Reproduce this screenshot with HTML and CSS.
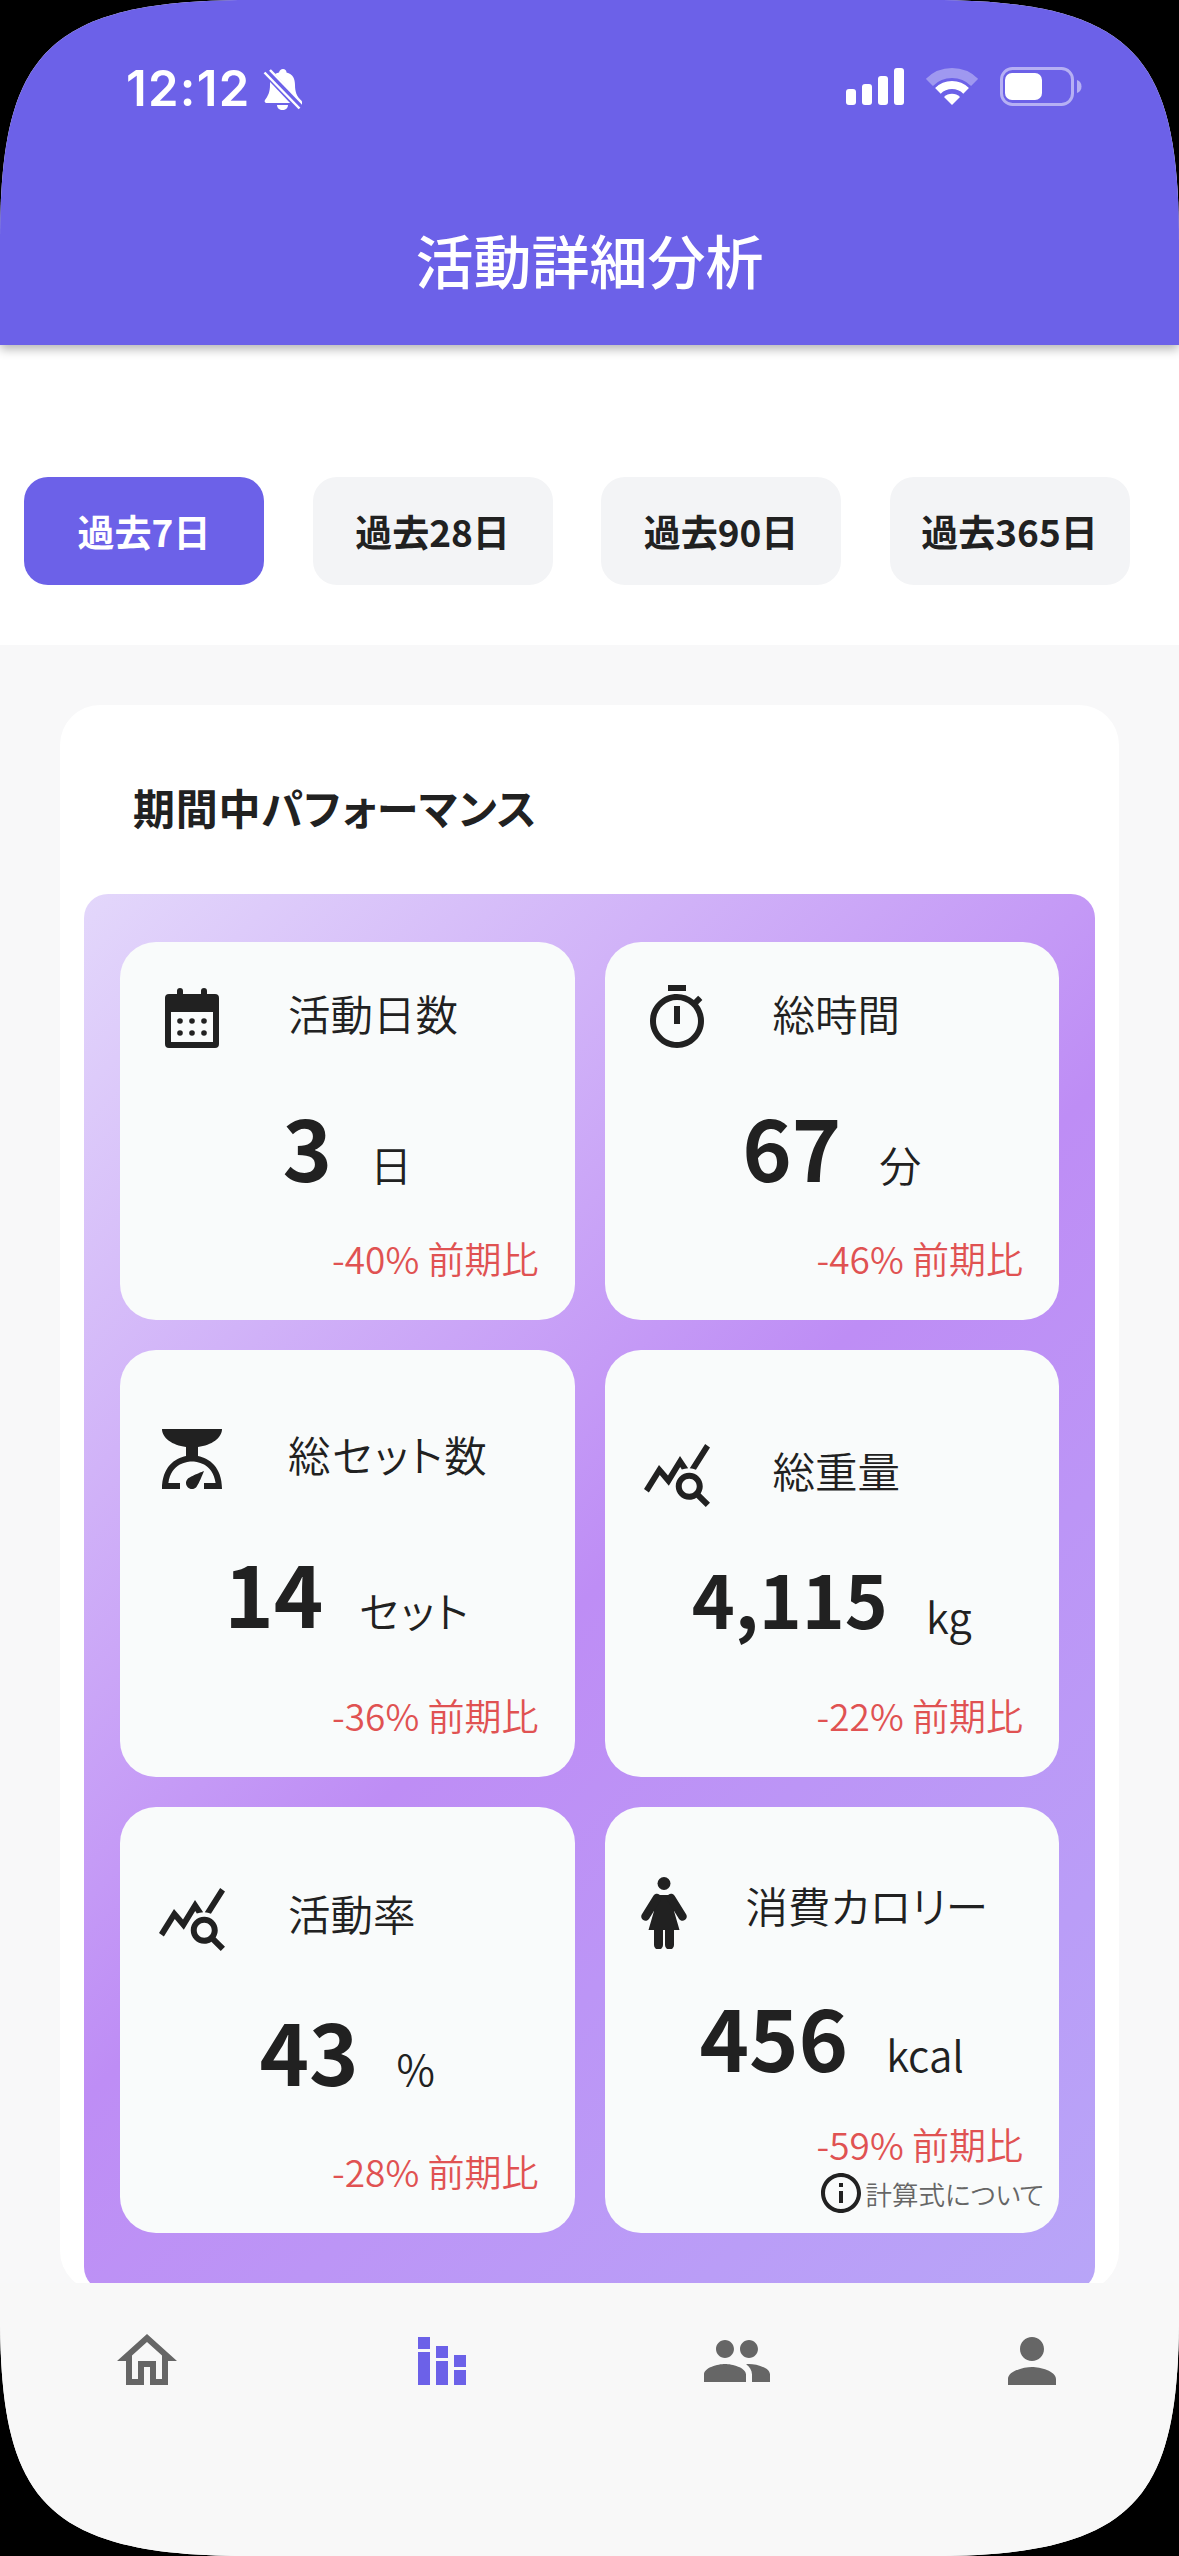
FILE: index.html
```html
<!DOCTYPE html>
<html lang="ja">
<head>
  <meta charset="UTF-8">
  <meta name="viewport" content="width=device-width, initial-scale=1.0">
  <title>活動詳細分析</title>
  <link rel="stylesheet" href="styles.css">
</head>
<body>
  <div class="screen">
    <header class="app-header">
      <div class="status-bar">
        <div class="status-left">
          <span class="clock">12:12</span>
          <svg class="bell" viewBox="0 0 39 41">
            <path d="M20 0c2 0 3.500 1.500 3.500 3.500C30 5 32 10 32 16c0 7 2 11 5 15 1 1.500 0 3-1.500 3h-32C2 34 1 32.500 2 31c3-4 5-8 5-15 0-6 2-11 9-12.500C16.500 1.500 18 0 20 0z" fill="#fff"/>
            <path d="M14 36h11c0 3-2.500 5-5.500 5S14 39 14 36z" fill="#fff"/>
            <path d="M3 2l35 37" stroke="#6c61e8" stroke-width="9"/>
            <path d="M1.500 3.500l35 36" stroke="#fff" stroke-width="2.500"/>
            <path d="M7 1l33 34" stroke="#fff" stroke-width="2.500"/>
          </svg>
        </div>
        <div class="status-right">
          <svg class="signal" viewBox="0 0 58 37" fill="#fff">
            <rect x="0" y="21" width="10" height="16" rx="3"/>
            <rect x="16" y="16" width="10" height="21" rx="3"/>
            <rect x="32" y="8" width="10" height="29" rx="3"/>
            <rect x="48" y="0" width="10" height="37" rx="3"/>
          </svg>
          <svg class="wifi" viewBox="0 0 52 37" fill="none">
            <path d="M3.400 14.400a32 32 0 0 1 45.200 0" stroke="#fff" stroke-opacity=".35" stroke-width="10"/>
            <path d="M11.900 22.900a20 20 0 0 1 28.200 0" stroke="#fff" stroke-width="8"/>
            <path d="M26 37l-8-8a11.300 11.300 0 0 1 16 0z" fill="#fff"/>
          </svg>
          <svg class="battery" viewBox="0 0 82 39">
            <rect x="1.500" y="1.500" width="71" height="36" rx="11" fill="none" stroke="#fff" stroke-opacity=".5" stroke-width="3"/>
            <rect x="5" y="6" width="37" height="27" rx="7" fill="#fff"/>
            <path d="M77 13c3 1 4.500 3.500 4.500 6.500S80 25 77 26z" fill="#fff" fill-opacity=".5"/>
          </svg>
        </div>
      </div>
      <h1 class="app-title">活動詳細分析</h1>
    </header>

    <nav class="period-tabs">
      <button class="period-tab active">過去7日</button>
      <button class="period-tab">過去28日</button>
      <button class="period-tab">過去90日</button>
      <button class="period-tab">過去365日</button>
    </nav>

    <main class="content">
      <section class="perf-card">
        <h2 class="perf-title">期間中パフォーマンス</h2>
        <div class="stat-grid">

          <div class="stat stat-days">
            <div class="stat-head">
              <svg class="icon" viewBox="0 0 72 72">
                <path fill-rule="evenodd" d="M13 12h8V9a3 3 0 0 1 6 0v3h18V9a3 3 0 0 1 6 0v3h8a4 4 0 0 1 4 4v46a4 4 0 0 1-4 4H13a4 4 0 0 1-4-4V16a4 4 0 0 1 4-4zm2 18v30h42V30z" fill="#212121"/>
                <g fill="#212121">
                  <circle cx="24" cy="39" r="2.800"/><circle cx="36" cy="39" r="2.800"/><circle cx="48" cy="39" r="2.800"/>
                  <circle cx="24" cy="51" r="2.800"/><circle cx="36" cy="51" r="2.800"/><circle cx="48" cy="51" r="2.800"/>
                </g>
              </svg>
              <span class="stat-label">活動日数</span>
            </div>
            <div class="stat-value"><b>3</b><span>日</span></div>
            <div class="stat-trend">-40% 前期比</div>
          </div>

          <div class="stat stat-days">
            <div class="stat-head">
              <svg class="icon" viewBox="0 0 24 24"><path d="M15 1H9v2h6V1zm-4 13h2V8h-2v6zm8.030-6.610l1.420-1.420c-.43-.51-.9-.99-1.410-1.410l-1.420 1.420C16.070 4.740 14.120 4 12 4c-4.970 0-9 4.030-9 9s4.020 9 9 9 9-4.030 9-9c0-2.120-.74-4.070-1.970-5.610zM12 20c-3.870 0-7-3.130-7-7s3.130-7 7-7 7 3.130 7 7-3.130 7-7 7z" fill="#212121"/></svg>
              <span class="stat-label">総時間</span>
            </div>
            <div class="stat-value"><b>67</b><span>分</span></div>
            <div class="stat-trend">-46% 前期比</div>
          </div>

          <div class="stat stat-sets">
            <div class="stat-head">
              <svg class="icon" viewBox="0 0 24 24"><path d="M14 11V8c4.560-.58 8-3.020 8-6H2c0 2.980 3.440 5.420 8 6v3c-3.680.73-8 3.610-8 11h6v-2H4.130c.93-6.830 6.650-7.200 7.870-7.200s6.940.37 7.870 7.200H16v2h6c0-7.390-4.320-10.270-8-11zm-2 11c-1.100 0-2-.9-2-2 0-.55.22-1.050.59-1.410C11.390 17.790 16 16 16 16s-1.790 4.610-2.590 5.410c-.36.37-.86.59-1.410.59z" fill="#212121"/></svg>
              <span class="stat-label">総セット数</span>
            </div>
            <div class="stat-value"><b>14</b><span>セット</span></div>
            <div class="stat-trend">-36% 前期比</div>
          </div>

          <div class="stat stat-weight">
            <div class="stat-head">
              <svg class="icon" viewBox="0 0 24 24"><path d="M19.880 18.470c.44-.7.7-1.510.7-2.390 0-2.490-2.010-4.500-4.500-4.500s-4.500 2.010-4.500 4.500 2.010 4.500 4.490 4.500c.88 0 1.700-.26 2.390-.7L21.580 23 23 21.580l-3.120-3.110zm-3.800.11c-1.380 0-2.500-1.120-2.500-2.500s1.120-2.500 2.500-2.500 2.500 1.120 2.500 2.500-1.120 2.500-2.500 2.500zm-.36-8.500c-.74.02-1.450.18-2.100.45l-.55-.83-3.800 6.180-3.010-3.520-3.630 5.810L1 17l5-8 3 3.500L13 6l2.720 4.080zm2.590.5c-.64-.28-1.330-.45-2.050-.49L21.380 2 23 3.180l-4.690 7.400z" fill="#212121"/></svg>
              <span class="stat-label">総重量</span>
            </div>
            <div class="stat-value"><b>4,115</b><span>kg</span></div>
            <div class="stat-trend">-22% 前期比</div>
          </div>

          <div class="stat stat-rate">
            <div class="stat-head">
              <svg class="icon" viewBox="0 0 24 24"><path d="M19.880 18.470c.44-.7.7-1.510.7-2.390 0-2.490-2.010-4.500-4.500-4.500s-4.500 2.010-4.500 4.500 2.010 4.500 4.490 4.500c.88 0 1.700-.26 2.390-.7L21.580 23 23 21.580l-3.120-3.110zm-3.800.11c-1.380 0-2.500-1.120-2.500-2.500s1.120-2.500 2.500-2.500 2.500 1.120 2.500 2.500-1.120 2.500-2.500 2.500zm-.36-8.500c-.74.02-1.450.18-2.100.45l-.55-.83-3.800 6.180-3.010-3.520-3.630 5.810L1 17l5-8 3 3.500L13 6l2.720 4.080zm2.590.5c-.64-.28-1.330-.45-2.050-.49L21.380 2 23 3.180l-4.690 7.400z" fill="#212121"/></svg>
              <span class="stat-label">活動率</span>
            </div>
            <div class="stat-value"><b>43</b><span>%</span></div>
            <div class="stat-trend">-28% 前期比</div>
          </div>

          <div class="stat stat-kcal">
            <div class="stat-head">
              <svg class="icon icon-narrow" viewBox="0 0 46 72" fill="#212121">
                <circle cx="23" cy="6.500" r="6.500"/>
                <path d="M17 18h12c2 0 3 1 4 3v13l5.500 19h-31L13 34V21c1-2 2-3 4-3z"/>
                <path d="M16 21L4.500 39.500M30 21l11.500 18.500" stroke="#212121" stroke-width="8.500" stroke-linecap="round"/>
                <path d="M13 52h9v16a4.500 4.500 0 0 1-9 0zM24 52h9v16a4.500 4.500 0 0 1-9 0z"/>
              </svg>
              <span class="stat-label">消費カロリー</span>
            </div>
            <div class="stat-value"><b>456</b><span>kcal</span></div>
            <div class="stat-trend">-59% 前期比</div>
            <div class="stat-note">
              <svg viewBox="0 0 24 24"><path d="M11 7h2v2h-2zm0 4h2v6h-2zm1-9C6.480 2 2 6.480 2 12s4.480 10 10 10 10-4.480 10-10S17.520 2 12 2zm0 18c-4.410 0-8-3.590-8-8s3.590-8 8-8 8 3.590 8 8-3.590 8-8 8z" fill="#212121"/></svg>
              <span>計算式について</span>
            </div>
          </div>

        </div>
      </section>
    </main>

    <footer class="bottom-nav">
      <svg class="nav-icon" viewBox="0 0 24 24"><path d="M12 5.690l5 4.500V18h-2v-6H9v6H7v-7.810l5-4.500M12 3L2 12h3v8h6v-6h2v6h6v-8h3L12 3z"/></svg>
      <svg class="nav-icon active" viewBox="0 0 72 72">
        <rect x="12" y="12" width="12" height="12"/><rect x="12" y="27" width="12" height="33"/>
        <rect x="30" y="21" width="12" height="12"/><rect x="30" y="36" width="12" height="24"/>
        <rect x="48" y="30" width="12" height="12"/><rect x="48" y="45" width="12" height="15"/>
      </svg>
      <svg class="nav-icon" viewBox="0 0 24 24"><path d="M16 11c1.660 0 2.990-1.340 2.990-3S17.660 5 16 5c-1.660 0-3 1.340-3 3s1.340 3 3 3zm-8 0c1.660 0 2.990-1.340 2.990-3S9.660 5 8 5C6.340 5 5 6.340 5 8s1.340 3 3 3zm0 2c-2.330 0-7 1.170-7 3.500V19h14v-2.500c0-2.330-4.670-3.500-7-3.500zm8 0c-.29 0-.62.02-.97.05 1.160.84 1.970 1.970 1.970 3.450V19h6v-2.500c0-2.330-4.670-3.500-7-3.500z"/></svg>
      <svg class="nav-icon" viewBox="0 0 24 24"><path d="M12 12c2.210 0 4-1.790 4-4s-1.790-4-4-4-4 1.790-4 4 1.790 4 4 4zm0 2c-2.670 0-8 1.340-8 4v2h16v-2c0-2.660-5.330-4-8-4z"/></svg>
    </footer>
  </div>
</body>
</html>
```

FILE: styles.css
```css
html, body {
  margin: 0;
  padding: 0;
  background-color: #000;
}

body {
  font-family: "Noto Sans CJK JP", "Noto Sans", sans-serif;
  font-feature-settings: "palt";
  color: #212121;
}

.screen {
  width: 1179px;
  height: 2556px;
  display: flex;
  flex-direction: column;
  overflow: hidden;
  background-color: #fff;
  clip-path: path("M248 0 H931 C1139 0 1179 60 1179 243 V2313 C1179 2496 1139 2556 931 2556 H248 C40 2556 0 2496 0 2313 V243 C0 60 40 0 248 0 Z");
}

/* header */
.app-header {
  position: relative;
  z-index: 2;
  height: 345px;
  flex-shrink: 0;
  background-color: #6c61e8;
  box-shadow: 0 4px 10px rgba(0, 0, 0, 0.3);
  color: #fff;
}

.status-bar {
  display: flex;
  justify-content: space-between;
  align-items: flex-start;
  padding: 60px 97px 0 126px;
  height: 50px;
}

.status-left {
  display: flex;
  align-items: center;
  gap: 12px;
}

.clock {
  font-family: Inter, "Liberation Sans", sans-serif;
  font-weight: 600;
  font-size: 49px;
  letter-spacing: 1.300px;
  line-height: 58px;
}

.bell {
  width: 39px;
  height: 41px;
}

.status-right {
  display: flex;
  align-items: flex-start;
  gap: 22px;
  padding-top: 8px;
}

.signal {
  width: 58px;
  height: 37px;
}

.wifi {
  width: 52px;
  height: 37px;
}

.battery {
  width: 82px;
  height: 39px;
  margin-top: -1px;
}

.app-title {
  margin: 113px 0 0;
  text-align: center;
  font-size: 58px;
  line-height: 72px;
  font-weight: 500;
}

/* period tabs */
.period-tabs {
  flex-shrink: 0;
  display: flex;
  gap: 48.500px;
  padding: 132px 0 60px 24px;
  background-color: #fff;
}

.period-tab {
  width: 240px;
  height: 108px;
  padding: 0;
  border: none;
  border-radius: 24px;
  background-color: #f3f4f6;
  color: #212121;
  font-family: inherit;
  font-feature-settings: inherit;
  font-size: 37px;
  font-weight: 700;
}

.period-tab.active {
  background-color: #6c61e8;
  color: #fff;
}

/* main content */
.content {
  flex: 1;
  min-height: 0;
  overflow: hidden;
  padding: 60px 60px 0;
  background-color: #f8f8f9;
}

.perf-card {
  padding: 0 24px;
  border-radius: 40px;
  background-color: #fff;
}

.perf-title {
  margin: 0;
  padding: 72px 0 57px 49px;
  font-size: 42px;
  letter-spacing: 0.800px;
  line-height: 60px;
  font-weight: 700;
}

.stat-grid {
  display: grid;
  grid-template-columns: 1fr 1fr;
  grid-template-rows: 378px 427px 426px;
  gap: 30px;
  padding: 48px 36px 58px;
  border-radius: 24px;
  background: linear-gradient(135deg, #e3d7fb 0%, #be8df5 50%, #b8a5f8 100%);
}

.stat {
  display: flex;
  flex-direction: column;
  border-radius: 36px;
  padding: 40px 36px 0;
  background-color: #f9fbfb;
}

.stat-head {
  display: flex;
  align-items: center;
  gap: 60px;
}

.icon {
  width: 72px;
  height: 72px;
  flex-shrink: 0;
}

.icon-narrow {
  width: 46px;
}

.stat-label {
  font-size: 42.500px;
  line-height: 60px;
  font-weight: 350;
  margin-top: -11px;
}

.stat-value {
  display: flex;
  align-items: baseline;
  justify-content: center;
  gap: 38px;
  margin-top: 42px;
  line-height: 100px;
}

.stat-value b {
  font-size: 84px;
  font-weight: 700;
}

.stat-value span {
  font-size: 42px;
  font-weight: 350;
}

.stat-trend {
  margin-top: auto;
  margin-bottom: 38px;
  text-align: right;
  font-size: 37px;
  line-height: 48px;
  font-weight: 350;
  color: #e05252;
}

.stat-sets {
  padding-top: 73px;
}

.stat-sets .stat-label,
.stat-sets .stat-value span {
  letter-spacing: 1.800px;
}

.stat-sets .stat-value {
  margin-top: 47px;
  gap: 36px;
}

.stat-weight {
  padding-top: 88px;
}

.stat-weight .stat-label {
  margin-top: -9px;
}

.stat-weight .stat-value {
  margin-top: 37px;
}

.stat-weight .stat-value b {
  font-size: 73px;
}

.stat-weight .stat-value span {
  transform: translateY(5px);
}

.stat-rate {
  padding-top: 75px;
}

.stat-rate .stat-value {
  margin-top: 46px;
}

.stat-kcal {
  padding-top: 70px;
}

.stat-kcal .stat-label {
  margin-top: -17px;
  margin-left: -1px;
}

.stat-kcal .stat-value {
  margin-top: 37px;
}

.stat-kcal .stat-trend {
  margin-bottom: 1px;
}

.stat-note {
  display: flex;
  align-items: center;
  justify-content: flex-end;
  margin: 0 -21px 16px 0;
  height: 48px;
  font-size: 26.500px;
  font-weight: 350;
  color: #666;
}

.stat-note svg {
  width: 48px;
  height: 48px;
}

/* bottom nav */
.bottom-nav {
  flex-shrink: 0;
  height: 273px;
  box-sizing: border-box;
  display: grid;
  grid-template-columns: repeat(4, 1fr);
  justify-items: center;
  align-items: start;
  padding-top: 42px;
  background-color: #f8f8f8;
}

.nav-icon {
  width: 72px;
  height: 72px;
  fill: #666;
}

.nav-icon.active {
  fill: #6c61e8;
}
```
